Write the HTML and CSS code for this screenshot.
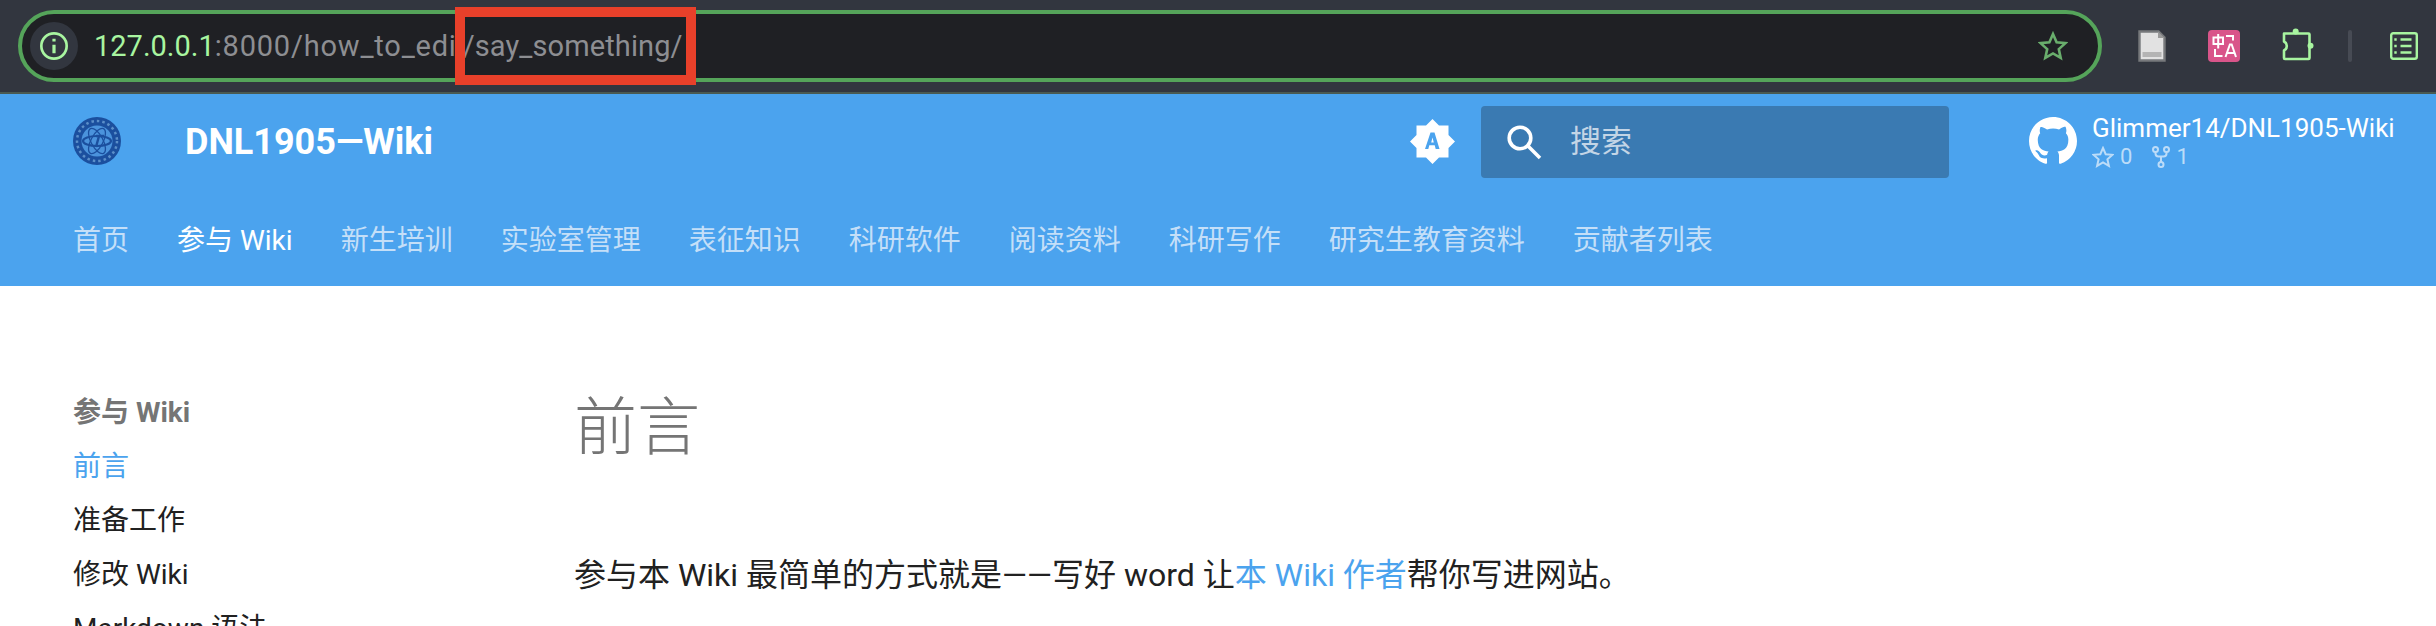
FILE: index.html
```html
<!DOCTYPE html>
<html lang="zh">
<head>
<meta charset="utf-8">
<title>前言 - DNL1905—Wiki</title>
<link rel="stylesheet" href="styles.css">
</head>
<body>
<div class="chrome">
  <div class="omnibox">
    <span class="info">
      <svg viewBox="0 0 24 24" width="32" height="32" fill="none" stroke="#a8f5a0" stroke-width="2"><circle cx="12" cy="12" r="9.5"/><path d="M12 11v6.5M12 6.5v2.2" stroke-width="2.4"/></svg>
    </span>
    <span class="url"><span class="host">127.0.0.1</span><span class="path">:8000/how_to_edi</span><span class="tail">/say_something/</span></span>
    <svg class="star" viewBox="0 0 30 30" width="30" height="30" fill="none" stroke="#69ad6c" stroke-width="2.6" stroke-linejoin="miter"><path d="M15 3l3.6 8.2 8.9.9-6.7 6 1.9 8.8L15 22.4l-7.7 4.5 1.9-8.8-6.7-6 8.9-.9z"/></svg>
  </div>
  <div class="tools">
    <svg class="tool-file" viewBox="0 0 28 32" width="28" height="32"><path d="M1.5 1.5h19l6 6v23h-25z" fill="#e2e2e2" stroke="#77797c" stroke-width="2.4"/><path d="M20 1.5l6.5 6.500h-6.500z" fill="#9a9a9a"/><path d="M4.500 22h19v5h-19z" fill="#b4b4b4"/></svg>
    <span class="tool-translate">
      <svg viewBox="0 0 32 32" width="32" height="32" fill="none" stroke="#fff" stroke-width="2"><path d="M5.500 7.500h9.500v6.500h-9.500zM10.200 4v14.500M18 6h7v4.500M7 19v7h7.500"/><path d="M17.500 27l4.400-12.500h1.800L28 27M19.300 23h7"/></svg>
    </span>
    <svg class="tool-puzzle" viewBox="0 0 32 33" width="32" height="33" fill="none" stroke="#a8f5a0" stroke-width="2.600" stroke-linejoin="round"><path d="M2 5.500h24.500a1 1 0 0 1 1 1v23.500a1 1 0 0 1-1 1H3a1 1 0 0 1-1-1v-7.500a5 5 0 0 0 0-9z"/><circle cx="13.700" cy="3.500" r="3" fill="#a8f5a0" stroke="none"/><circle cx="28.500" cy="17.700" r="3" fill="#a8f5a0" stroke="none"/></svg>
    <span class="tool-sep"></span>
    <svg class="tool-list" viewBox="0 0 28 28" width="28" height="28" fill="none" stroke="#a8f5a0" stroke-width="2.400"><rect x="1.200" y="1.200" width="25.600" height="25.600" rx="2"/><path d="M10.500 7.500h11M10.500 14h11M10.500 20.500h11" stroke-width="2.600"/><path d="M5.500 6.300v2.400M5.500 12.800v2.400M5.500 19.300v2.400" stroke-width="2.400"/></svg>
  </div>
  <span class="redbox"></span>
</div>

<header class="header">
  <div class="topbar">
    <svg class="logo" viewBox="0 0 48 48" width="48" height="48" fill="none">
      <circle cx="24" cy="24" r="24" fill="#1b4f9e"/>
      <circle cx="24" cy="24" r="20" stroke="#5b8fc9" stroke-width="2.500" stroke-dasharray="2.500 3"/>
      <circle cx="24" cy="24" r="15.500" fill="#4b93dc"/>
      <g stroke="#1b4f9e" stroke-width="1.300">
        <ellipse cx="24" cy="24" rx="6" ry="14" transform="rotate(-28 24 24)"/>
        <ellipse cx="24" cy="24" rx="6" ry="14" transform="rotate(28 24 24)"/>
      </g>
      <ellipse cx="24" cy="24" rx="14" ry="5" stroke="#1b4f9e" stroke-width="2.200"/>
      <path d="M26 19l-3 11M23 19h8" stroke="#1b4f9e" stroke-width="2.400"/>
    </svg>
    <div class="site-title">DNL1905—Wiki</div>
    <svg class="palette" viewBox="0 0 45 45" width="45" height="45"><path fill="#fff" d="M22.500 0L29 6.500h9.500V16l6.500 6.500-6.500 6.500v9.500H29L22.500 45 16 38.500H6.500V29L0 22.500 6.500 16V6.500H16z"/><path fill="#4ba3ee" fill-rule="evenodd" d="M20.500 13.500h4l5 16.500h-3.800l-1-3.800h-5.400l-1 3.800H15zM21.200 23.400h2.600l-1.300-5z"/></svg>
    <div class="search">
      <svg viewBox="0 0 35 35" width="35" height="35" fill="none" stroke="#fff" stroke-width="3.600"><circle cx="13" cy="13" r="10.800"/><path d="M21 21l12 12"/></svg>
      <span class="search-label">搜索</span>
    </div>
    <div class="repo">
      <svg class="gh" viewBox="0 0 16 16" width="48" height="48"><path fill="#fff" d="M8 0C3.580 0 0 3.580 0 8c0 3.540 2.290 6.530 5.470 7.590.4.070.55-.17.55-.38 0-.19-.01-.82-.01-1.490-2.010.37-2.530-.49-2.690-.94-.09-.23-.48-.94-.82-1.130-.28-.15-.68-.52-.01-.53.63-.01 1.080.58 1.230.82.720 1.210 1.870.870 2.330.660.070-.520.280-.870.510-1.070-1.780-.200-3.640-.890-3.640-3.950 0-.870.310-1.590.820-2.150-.080-.200-.360-1.020.080-2.120 0 0 .670-.210 2.200.820.640-.180 1.320-.270 2-.270.680 0 1.360.090 2 .270 1.530-1.040 2.200-.820 2.200-.820.440 1.100.160 1.920.080 2.120.510.560.820 1.270.820 2.150 0 3.070-1.870 3.750-3.650 3.950.290.250.540.730.540 1.480 0 1.070-.010 1.930-.010 2.200 0 .210.150.460.550.380A8.013 8.013 0 0 0 16 8c0-4.420-3.580-8-8-8z"/></svg>
      <div class="repo-text">
        <div class="repo-name">Glimmer14/DNL1905-Wiki</div>
        <div class="repo-stats">
          <svg viewBox="0 0 22 22" width="22" height="22" fill="none" stroke="#bcdcf8" stroke-width="2"><path d="M11 2l2.700 6.200 6.800.6-5.100 4.500 1.500 6.600L11 16.400l-5.900 3.500 1.500-6.600L1.500 8.800l6.800-.6z"/></svg>
          <span class="stat">0</span>
          <svg class="fork" viewBox="0 0 18 22" width="18" height="22" fill="none" stroke="#bcdcf8" stroke-width="2"><circle cx="3.500" cy="3.500" r="2.500"/><circle cx="14.500" cy="3.500" r="2.500"/><circle cx="9" cy="18.500" r="2.500"/><path d="M3.500 6v1.500a3 3 0 0 0 3 3h5a3 3 0 0 0 3-3V6M9 10.500V16"/></svg>
          <span class="stat">1</span>
        </div>
      </div>
    </div>
  </div>
  <nav class="tabs">
    <a class="tab">首页</a>
    <a class="tab tab-active">参与 Wiki</a>
    <a class="tab">新生培训</a>
    <a class="tab">实验室管理</a>
    <a class="tab">表征知识</a>
    <a class="tab">科研软件</a>
    <a class="tab">阅读资料</a>
    <a class="tab">科研写作</a>
    <a class="tab">研究生教育资料</a>
    <a class="tab">贡献者列表</a>
  </nav>
</header>

<main class="main">
  <aside class="sidebar">
    <div class="side-title">参与 Wiki</div>
    <a class="side-link side-active">前言</a>
    <a class="side-link">准备工作</a>
    <a class="side-link">修改 Wiki</a>
    <a class="side-link">Markdown 语法</a>
  </aside>
  <article class="content">
    <h1 class="page-title">前言</h1>
    <p class="para">参与本 Wiki 最简单的方式就是——写好 word 让<a class="link">本 Wiki 作者</a>帮你写进网站。</p>
  </article>
</main>
</body>
</html>
```

FILE: styles.css
```css
* { box-sizing: border-box; }
html, body { margin: 0; padding: 0; height: 626px; overflow: hidden; background: #fff; }
body { font-family: Roboto, "Noto Sans CJK SC", sans-serif; color: #212121; }

.chrome {
  position: relative;
  display: flex;
  align-items: flex-start;
  height: 94px;
  padding: 10px 18px 0 18px;
  background: #32363f;
  border-bottom: 2px solid #4a5a52;
}
.omnibox {
  display: flex;
  align-items: center;
  width: 2084px;
  height: 72px;
  padding: 0 30px 0 8px;
  background: #1f2024;
  border: 4px solid #55a45a;
  border-radius: 36px;
}
.info {
  display: flex;
  align-items: center;
  justify-content: center;
  width: 48px;
  height: 48px;
  border-radius: 50%;
  background: #32363f;
  flex: none;
}
.url {
  display: flex;
  flex: 1;
  margin-left: 16px;
  font-size: 29px;
  color: #8d8e92;
  white-space: nowrap;
}
.host { color: #a8f5a0; }
.path { width: 252px; overflow: hidden; letter-spacing: 0.8px; }
.tail { font-size: 29px; margin-left: -4px; letter-spacing: 0.1px; }
.star { flex: none; }
.tools {
  display: flex;
  align-items: center;
  height: 72px;
  margin-left: 36px;
}
.tool-file { flex: none; }
.tool-translate {
  display: flex;
  width: 32px;
  height: 32px;
  margin-left: 42px;
  border-radius: 4px;
  background: #d9558a;
}
.tool-puzzle { margin-left: 42px; margin-top: -3px; }
.tool-sep { width: 4px; height: 32px; margin-left: 34px; border-radius: 2px; background: #474b54; }
.tool-list { margin-left: 38px; }
.redbox {
  position: absolute;
  left: 455px;
  top: 7px;
  width: 241px;
  height: 78px;
  border: 10px solid #e8402a;
}

.header {
  height: 192px;
  background: #4ba3ee;
  color: #fff;
}
.topbar {
  display: flex;
  align-items: center;
  height: 96px;
  padding-left: 73px;
}
.logo { flex: none; margin-top: -2px; }
.site-title {
  width: 1225px;
  margin-left: 64px;
  font-size: 36px;
  font-weight: 700;
}
.palette { flex: none; margin-top: -2px; }
.search {
  display: flex;
  align-items: center;
  width: 468px;
  height: 72px;
  margin-left: 26px;
  padding-left: 26px;
  background: #3a7ab2;
  border-radius: 4px;
}
.search-label { margin-left: 28px; font-size: 31px; line-height: 42px; margin-top: -1px; color: #c3d5e6; }
.repo { display: flex; align-items: center; margin-left: 80px; margin-top: -2px; }
.repo-text { margin-left: 15px; }
.repo-name { font-size: 26px; line-height: 30px; white-space: nowrap; }
.repo-stats { display: flex; align-items: center; height: 26px; margin-top: 1px; font-size: 22px; color: #bcdcf8; }
.stat { margin-left: 6px; }
.fork { margin-left: 20px; }

.tabs {
  display: flex;
  gap: 48px;
  padding-left: 73px;
  height: 96px;
  padding-top: 31px;
  font-size: 28px;
  line-height: 40px;
}
.tab { color: #c4dff8; white-space: nowrap; }
.tab-active { color: #fff; }

.main { display: flex; padding-left: 73px; }
.sidebar { width: 501px; flex: none; padding-top: 100px; font-size: 28px; }
.side-title { height: 54px; line-height: 54px; font-weight: 700; color: #757575; }
.side-link { display: block; height: 54px; line-height: 54px; color: #212121; white-space: nowrap; }
.side-active { color: #4ba3ee; }
.content { padding-top: 97px; }
.page-title {
  margin: 0;
  font-size: 63px;
  line-height: 90px;
  font-weight: 300;
  color: #757575;
}
.para { margin: 80px 0 0; font-size: 32px; line-height: 44px; color: #212121; white-space: nowrap; }
.link { color: #4ba3ee; }
```
